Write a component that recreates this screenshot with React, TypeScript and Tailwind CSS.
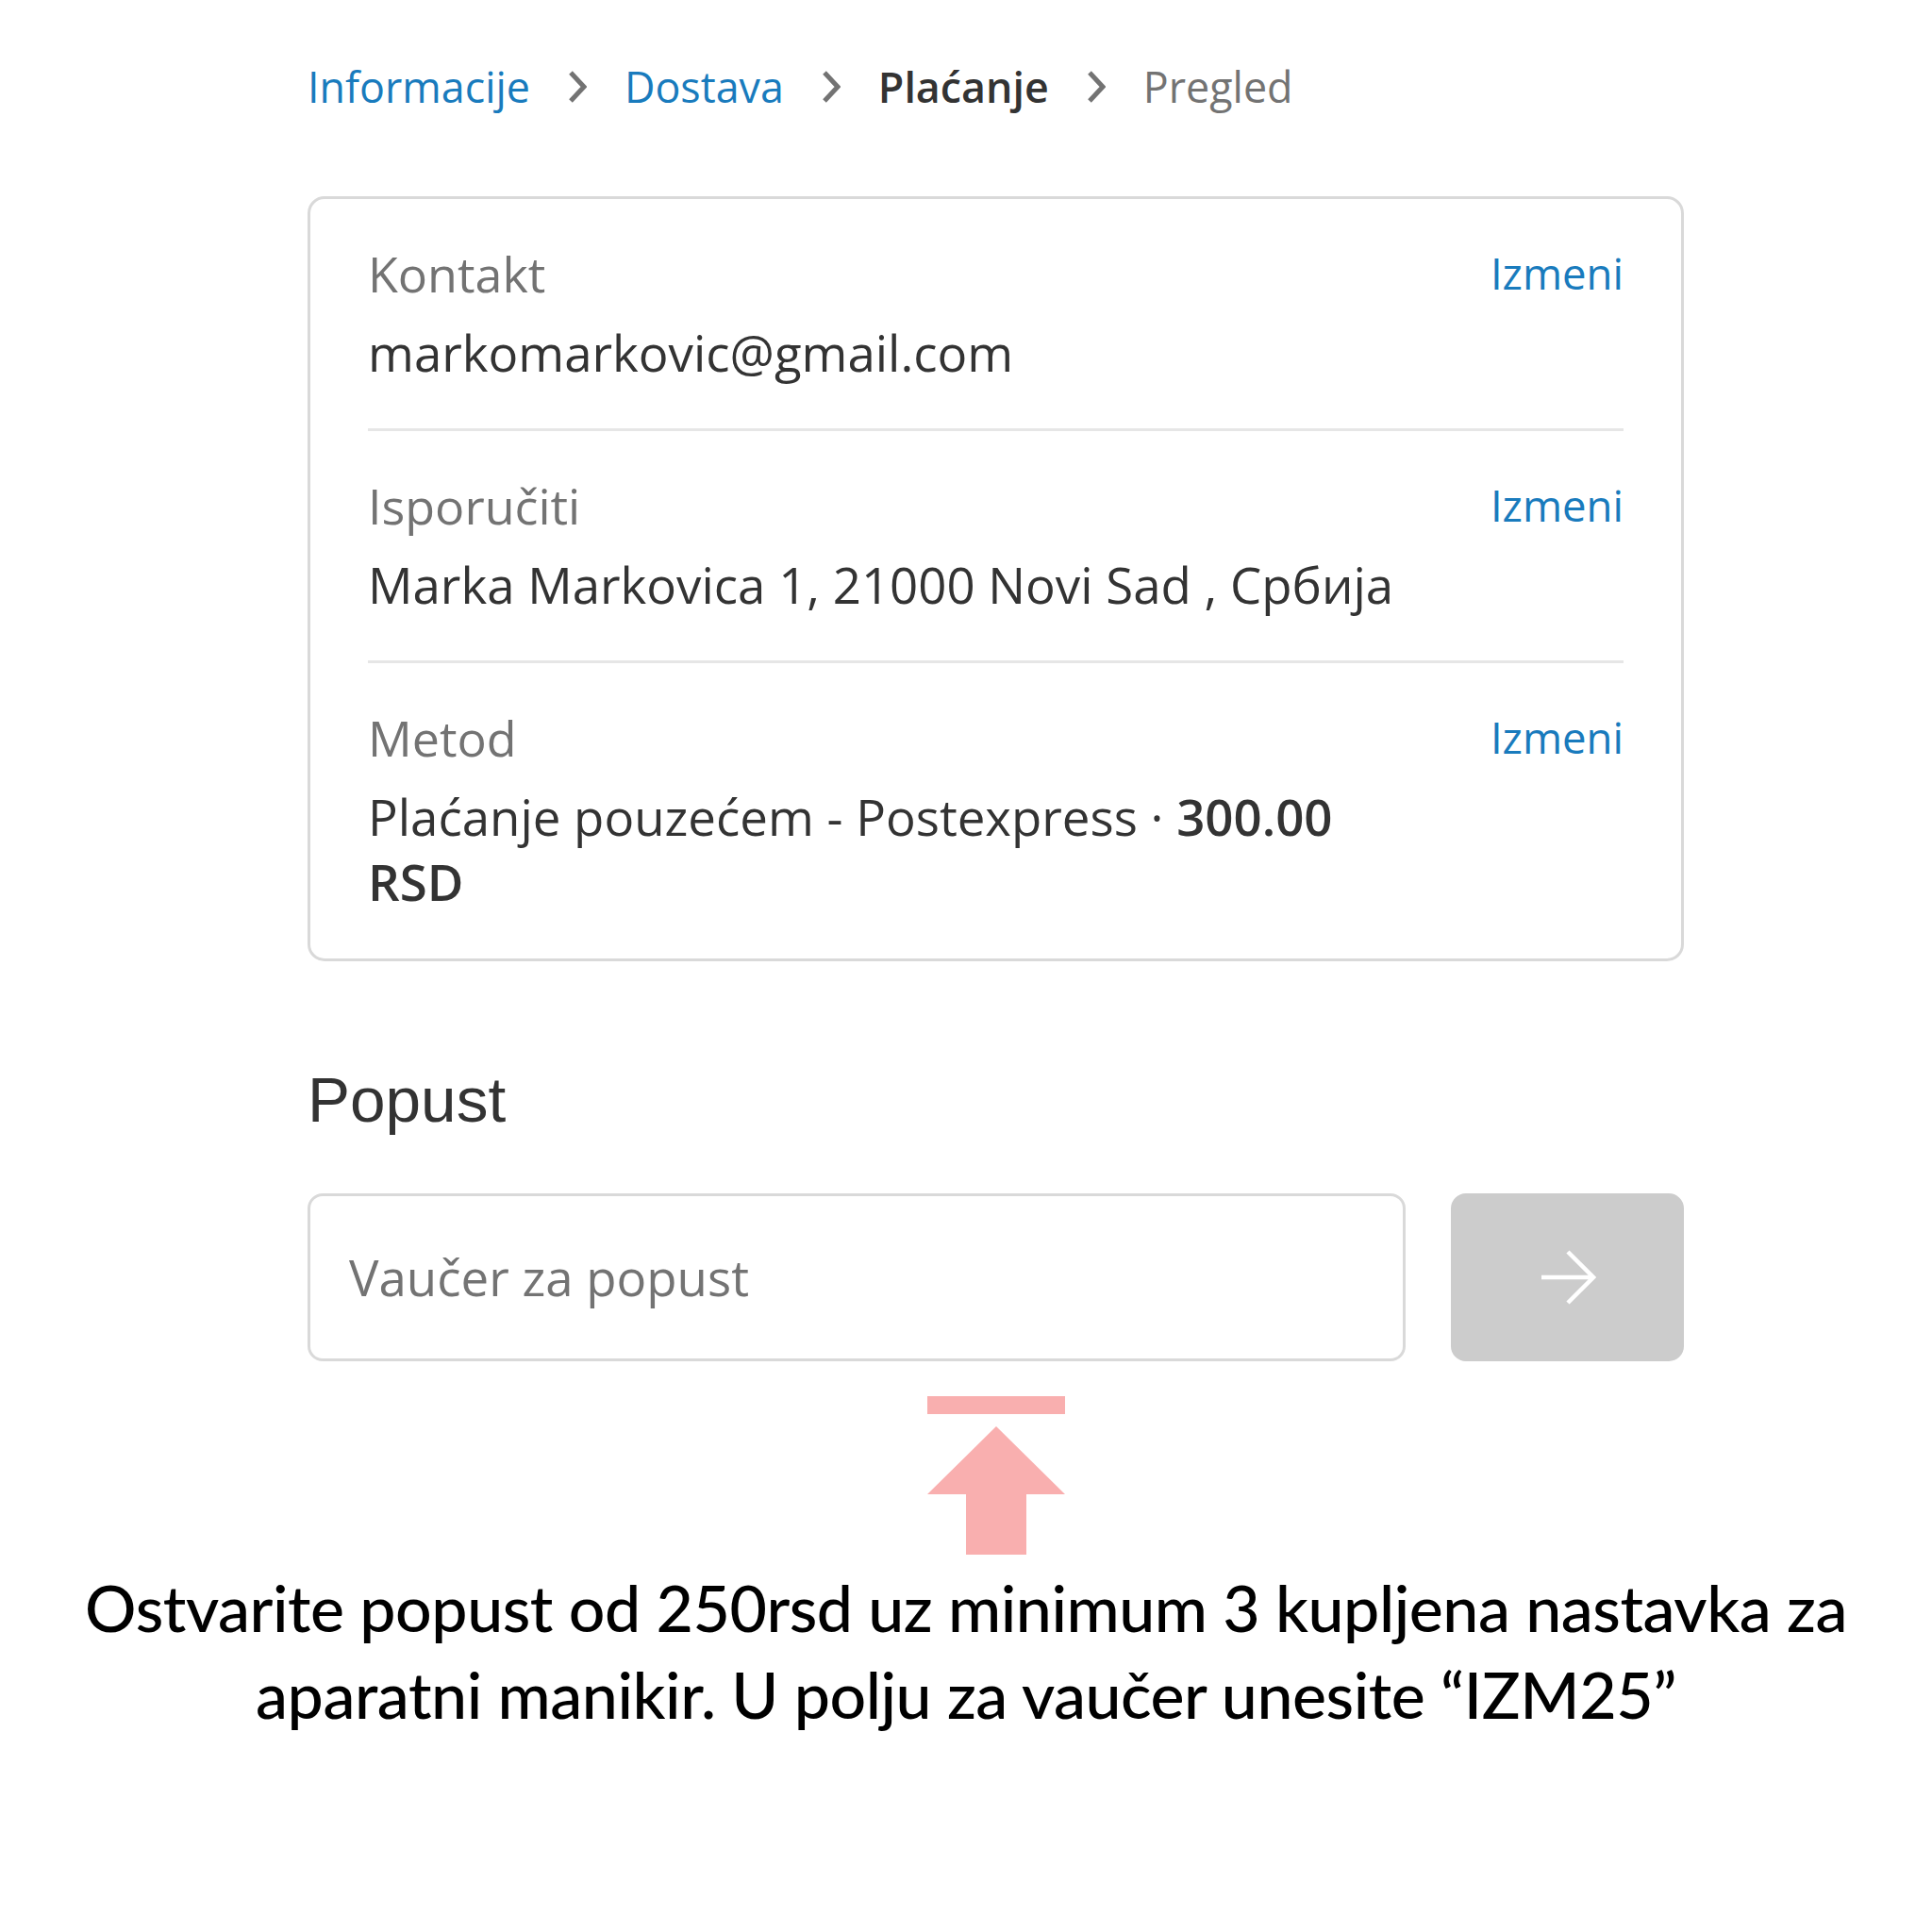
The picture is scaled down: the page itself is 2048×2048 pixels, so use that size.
import React from "react";

const Chevron = () => (
  <svg width="20" height="36" viewBox="0 0 20 36" className="mx-[40px] shrink-0" aria-hidden>
    <path d="M3 3 L17 18 L3 33" fill="none" stroke="#737373" strokeWidth="5" />
  </svg>
);

const Block = ({
  label,
  children,
  last,
}: {
  label: string;
  children: React.ReactNode;
  last?: boolean;
}) => (
  <div className={`flex pt-[44px] ${last ? "pb-[47px]" : "pb-[46px] border-b-[3px] border-[#e6e6e6]"}`}>
    <div className="flex-1 min-w-0 flex flex-col gap-[15px]">
      <div className="text-[52px] leading-[69px] text-[#737373]">{label}</div>
      <div className="text-[52.8px] leading-[69px] text-[#333333]">{children}</div>
    </div>
    <div className="pl-[100px] text-[45.5px] leading-[69px] text-[#197bbd] shrink-0">Izmeni</div>
  </div>
);

export default function App() {
  return (
    <div className="w-[2048px] h-[2048px] bg-white overflow-hidden">
      <div className="pl-[326px] w-[1785px]" style={{ fontFamily: '"Open Sans", sans-serif' }}>
        <nav className="pt-[62px] flex items-center h-[122px] text-[44.8px] leading-[60px]">
          <span className="text-[#197bbd]">Informacije</span>
          <Chevron />
          <span className="text-[#197bbd]">Dostava</span>
          <Chevron />
          <span className="text-[#333333] font-semibold">Plaćanje</span>
          <Chevron />
          <span className="text-[#737373]">Pregled</span>
        </nav>

        <div className="mt-[86px] w-[1459px] border-[3px] border-[#d9d9d9] rounded-[18px] px-[61px]">
          <Block label="Kontakt">markomarkovic@gmail.com</Block>
          <Block label="Isporučiti">Marka Markovica 1, 21000 Novi Sad , Србија</Block>
          <Block label="Metod" last>
            Plaćanje pouzećem - Postexpress · <span className="font-semibold">300.00 RSD</span>
          </Block>
        </div>

        <h2
          className="mt-[103px] text-[67.5px] leading-[87px] text-[#333333]"
          style={{ fontFamily: '"Liberation Sans", Arial, sans-serif' }}
        >
          Popust
        </h2>

        <div className="mt-[56px] flex gap-[48px] w-[1459px]">
          <div className="flex-1 h-[178px] border-[3px] border-[#d9d9d9] rounded-[16px] flex items-center pl-[41px]">
            <span className="text-[52.8px] text-[#737373]">Vaučer za popust</span>
          </div>
          <div className="w-[247px] h-[178px] rounded-[16px] bg-[#cccccc] flex items-center justify-center">
            <svg width="60" height="58" viewBox="0 0 60 58" aria-hidden>
              <path d="M2 29 H57 M30 2 L57 29 L30 56" fill="none" stroke="#ffffff" strokeWidth="4.5" />
            </svg>
          </div>
        </div>

        <div className="mt-[37px] w-[1459px] flex justify-center">
          <svg width="146" height="168" viewBox="0 0 146 168" aria-hidden>
            <rect x="0" y="0" width="146" height="19" fill="#f9afaf" />
            <polygon points="73,32 146,104 105,104 105,168 41,168 41,104 0,104" fill="#f9afaf" />
          </svg>
        </div>
      </div>

      <p
        className="mt-[10px] text-center text-[68px] leading-[92px] text-black font-medium tracking-[-0.45px]"
        style={{ fontFamily: 'Lato, "Noto Sans", sans-serif' }}
      >
        Ostvarite popust od 250rsd uz minimum 3 kupljena nastavka za
        <br />
        aparatni manikir. U polju za vaučer unesite “IZM25”
      </p>
    </div>
  );
}
